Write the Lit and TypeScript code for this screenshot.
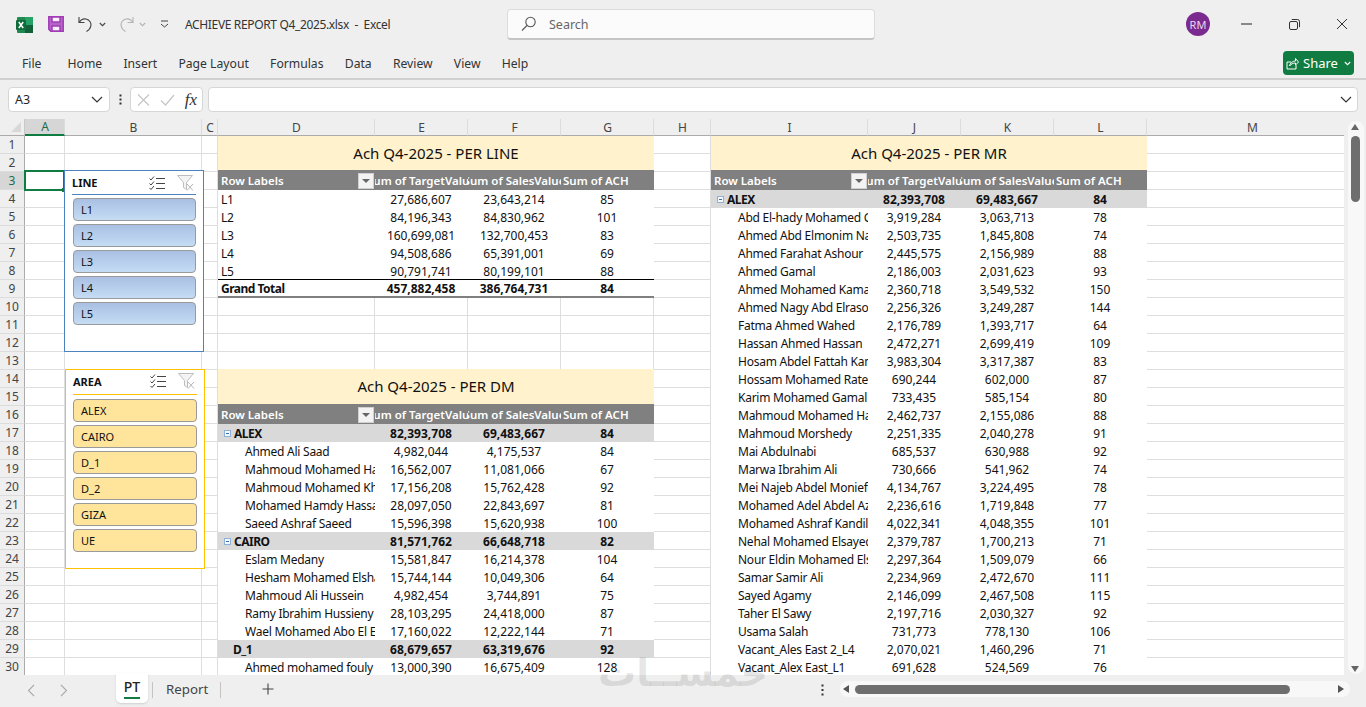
import { LitElement, html, css } from "lit";
import { customElement } from "lit/decorators.js";

const COLS = ["A","B","C","D","E","F","G","H","I","J","K","L","M"];

type Row = [string, string, string, string, string?];
// kinds: "" child (indented), "t" top-level item, "g" group with collapse box, "h" group with no box, "T" grand total

const LINE: Row[] = [
  ["L1","27,686,607","23,643,214","85","t"],
  ["L2","84,196,343","84,830,962","101","t"],
  ["L3","160,699,081","132,700,453","83","t"],
  ["L4","94,508,686","65,391,001","69","t"],
  ["L5","90,791,741","80,199,101","88","t"],
  ["Grand Total","457,882,458","386,764,731","84","T"],
];
const DM: Row[] = [
  ["ALEX","82,393,708","69,483,667","84","g"],
  ["Ahmed Ali Saad","4,982,044","4,175,537","84"],
  ["Mahmoud Mohamed Hassan","16,562,007","11,081,066","67"],
  ["Mahmoud Mohamed Khalil","17,156,208","15,762,428","92"],
  ["Mohamed Hamdy Hassan","28,097,050","22,843,697","81"],
  ["Saeed Ashraf Saeed","15,596,398","15,620,938","100"],
  ["CAIRO","81,571,762","66,648,718","82","g"],
  ["Eslam Medany","15,581,847","16,214,378","104"],
  ["Hesham Mohamed Elshamy","15,744,144","10,049,306","64"],
  ["Mahmoud Ali Hussein","4,982,454","3,744,891","75"],
  ["Ramy Ibrahim Hussieny Ali","28,103,295","24,418,000","87"],
  ["Wael Mohamed Abo El Ela","17,160,022","12,222,144","71"],
  ["D_1","68,679,657","63,319,676","92","h"],
  ["Ahmed mohamed fouly","13,000,390","16,675,409","128"],
];
const MR: Row[] = [
  ["ALEX","82,393,708","69,483,667","84","g"],
  ["Abd El-hady Mohamed Gaber","3,919,284","3,063,713","78"],
  ["Ahmed Abd Elmonim Nasr","2,503,735","1,845,808","74"],
  ["Ahmed Farahat Ashour","2,445,575","2,156,989","88"],
  ["Ahmed Gamal","2,186,003","2,031,623","93"],
  ["Ahmed Mohamed Kamal","2,360,718","3,549,532","150"],
  ["Ahmed Nagy Abd Elrasoul","2,256,326","3,249,287","144"],
  ["Fatma Ahmed Wahed","2,176,789","1,393,717","64"],
  ["Hassan Ahmed Hassan","2,472,271","2,699,419","109"],
  ["Hosam Abdel Fattah Kamel","3,983,304","3,317,387","83"],
  ["Hossam Mohamed Rateb","690,244","602,000","87"],
  ["Karim Mohamed Gamal","733,435","585,154","80"],
  ["Mahmoud Mohamed Hassan","2,462,737","2,155,086","88"],
  ["Mahmoud Morshedy","2,251,335","2,040,278","91"],
  ["Mai Abdulnabi","685,537","630,988","92"],
  ["Marwa Ibrahim Ali","730,666","541,962","74"],
  ["Mei Najeb Abdel Monief","4,134,767","3,224,495","78"],
  ["Mohamed Adel Abdel Aziz","2,236,616","1,719,848","77"],
  ["Mohamed Ashraf Kandil","4,022,341","4,048,355","101"],
  ["Nehal Mohamed Elsayed","2,379,787","1,700,213","71"],
  ["Nour Eldin Mohamed Elsayed","2,297,364","1,509,079","66"],
  ["Samar Samir Ali","2,234,969","2,472,670","111"],
  ["Sayed Agamy","2,146,099","2,467,508","115"],
  ["Taher El Sawy","2,197,716","2,030,327","92"],
  ["Usama Salah","731,773","778,130","106"],
  ["Vacant_Ales East 2_L4","2,070,021","1,460,296","71"],
  ["Vacant_Alex East_L1","691,628","524,569","76"],
];

type Pivot = { col: number; row: number; title: string; rows: Row[]; lift?: boolean };
const PIVOTS: Pivot[] = [
  { col: 4, row: 1, title: "Ach Q4-2025 - PER LINE", rows: LINE },
  { col: 4, row: 14, title: "Ach Q4-2025 - PER DM", rows: DM, lift: true },
  { col: 9, row: 1, title: "Ach Q4-2025 - PER MR", rows: MR },
];

const pos = (c: number, r: number, cs = 1, rs = 1) =>
  `grid-column:${c + 1} / span ${cs};grid-row:${r + 1} / span ${rs}`;

@customElement("app-root")
export class AppRoot extends LitElement {
  static styles = css`
    :host { display: block; width: 1366px; height: 707px; overflow: hidden; background: #efefef; font-family: "Noto Sans", "Open Sans", sans-serif; color: #262626; }
    .app { display: flex; flex-direction: column; height: 707px; position: relative; }
    svg { display: block; flex: none; }

    .titlebar { height: 48px; display: flex; align-items: center; position: relative; flex: none; }
    .qat { display: flex; align-items: center; padding-left: 16px; }
    .doc { font-size: 12px; margin-left: 16px; color: #333; white-space: pre; letter-spacing: -0.35px; }
    .search { position: absolute; left: 507px; top: 9px; width: 368px; height: 31px; box-sizing: border-box; background: #fbfbfb; border: 1px solid #dcdcdc; border-bottom: 2px solid #c4c4c4; border-radius: 4px; display: flex; align-items: center; padding-left: 13px; gap: 13px; font-size: 12.5px; color: #666; }
    .right { margin-left: auto; display: flex; align-items: center; }
    .avatar { width: 24px; height: 24px; border-radius: 50%; background: #7b2a8f; color: #e8d6ee; font-size: 11px; display: flex; align-items: center; justify-content: center; margin-right: 12px; }
    .win { width: 48px; display: flex; justify-content: center; }

    .ribbon { height: 30px; flex: none; display: flex; align-items: center; font-size: 12.2px; color: #333; padding-left: 22px; position: relative; }
    .ribbon span { margin-right: 21.2px; }
    .ribbon span.file { margin-right: 26px; }
    .share { position: absolute; left: 1283px; top: 3px; width: 71px; height: 24px; background: #107c41; border-radius: 4px; color: #fff; display: flex; align-items: center; justify-content: center; gap: 4px; font-size: 13px; box-sizing: border-box; }
    .share .lbl { font-weight: 400; }
    .share .car { margin-left: 2px; }
    .shadowline { height: 2px; flex: none; background: #d0d0d0; }

    .fbar { height: 39px; flex: none; display: flex; align-items: center; padding: 0 8px; }
    .box { background: #fff; border: 1px solid #d6d6d6; border-radius: 4px; height: 25px; box-sizing: border-box; display: flex; align-items: center; }
    .namebox { width: 102px; font-size: 12.5px; padding: 0 6px; justify-content: space-between; }
    .vdots { width: 20px; display: flex; justify-content: center; }
    .fxbox { width: 73px; padding: 0 5px 0 6px; justify-content: space-between; margin-right: 5px; }
    .fx { font-family: "Liberation Serif", serif; font-style: italic; font-size: 17px; color: #333; }
    .finput { flex: 1; justify-content: flex-end; padding-right: 5px; }

    .sheetwrap { flex: none; height: 556px; display: flex; position: relative; overflow: hidden; }
    .grid { display: grid; grid-template-columns: 25px 40px 137px 16px 157px 93px 93px 93px 57px 157px 93px 93px 93px 211px; grid-template-rows: 17px repeat(30, 18px); width: 1344px; height: 556px; overflow: hidden; background: #fff; flex: none; }
    .corner { background: #efefef; border-bottom: 1px solid #ababab; border-right: 1px solid #c8c8c8; box-sizing: border-box; position: relative; }
    .corner::after { content: ""; position: absolute; right: 3px; bottom: 3px; border: 5px solid transparent; border-right-color: #d8d8d8; border-bottom-color: #d8d8d8; }
    .ch { background: #efefef; border-bottom: 1px solid #ababab; border-right: 1px solid #dcdcdc; box-sizing: border-box; font-size: 12px; color: #444; display: flex; align-items: center; justify-content: center; padding-left: 1px; }
    .ch.sel { background: #d6d6d6; border-bottom: 2px solid #107c41; color: #1a6d4a; }
    .rh { background: #efefef; border-bottom: 1px solid #dcdcdc; border-right: 1px solid #ababab; box-sizing: border-box; font-size: 12px; color: #444; display: flex; align-items: center; justify-content: center; }
    .rh.sel { background: #d6d6d6; color: #1a6d4a; }
    .c { border-right: 1px solid #dedede; border-bottom: 1px solid #dedede; box-sizing: border-box; }

    .title { background: #fff2cc; display: flex; align-items: center; justify-content: center; font-size: 15px; color: #111; position: relative; padding-bottom: 3px; box-sizing: border-box; }
    .title.lift { margin-top: -1px; }
    .hd { background: #808080; color: #fff; font-size: 11.5px; font-weight: 600; margin-top: -2px; display: flex; align-items: center; justify-content: center; white-space: nowrap; overflow: hidden; position: relative; }
    .hd.lbl { justify-content: flex-start; padding-left: 3px; }
    .hd.start { justify-content: flex-start; padding-left: 2px; }
    .dd { position: absolute; right: 1px; top: 3px; width: 16px; height: 16px; background: #f3f3f3; border: 1px solid #d0d0d0; box-sizing: border-box; display: flex; align-items: center; justify-content: center; }
    .dd::after { content: ""; border: 4px solid transparent; border-top: 4px solid #666; border-bottom: 0; }
    .td { background: #fff; font-size: 12px; color: #111; display: flex; align-items: center; justify-content: center; white-space: nowrap; overflow: hidden; padding-right: 1px; box-sizing: border-box; }
    .td.lbl { justify-content: flex-start; padding: 0 0 0 27px; letter-spacing: -0.25px; }
    .td.lbl.t { padding-left: 3px; }
    .td.lbl.g { padding-left: 6px; gap: 3px; }
    .td.lbl.h { padding-left: 15px; }
    .td.bold { font-weight: 700; }
    .td.lbl.bold { letter-spacing: -0.5px; }
    .td.band { background: #d9d9d9; }
    .td.tot { margin-top: -1px; padding-top: 1px; border-top: 1px solid #000; border-bottom: 2px solid #808080; }
    .box9 { width: 7px; height: 7px; border: 1px solid #8fb0d8; background: #f4f7fb; box-sizing: border-box; position: relative; flex: none; }
    .box9::after { content: ""; position: absolute; left: 1px; right: 1px; top: 2px; height: 1px; background: #3b6ea5; }

    .selbox { position: absolute; left: 24px; top: 51px; width: 41px; height: 21px; border: 2px solid #107c41; box-sizing: border-box; }
    .handle { position: absolute; left: 62px; top: 69px; width: 4px; height: 4px; background: #107c41; }

    .slicer { position: absolute; background: #fff; box-sizing: border-box; border: 1px solid; padding: 0 7px; }
    .slicer.line { left: 64px; top: 51px; width: 140px; height: 182px; border-color: #4a83bd; }
    .slicer.area { left: 65px; top: 250px; width: 140px; height: 200px; border-color: #ffc000; }
    .sh { height: 24px; box-sizing: border-box; display: flex; align-items: center; font-size: 11px; font-weight: 700; color: #111; border-bottom: 1px solid #4a83bd; }
    .area .sh { border-bottom-color: #ffc000; height: 25px; padding-bottom: 2px; }
    .sh .name { flex: 1; }
    .sh .multi { margin-right: 12px; }
    .sh .clear { margin-right: 2px; }
    .items { display: flex; flex-direction: column; gap: 3px; margin-top: 3px; padding: 0 0 0 1px; }
    .area .items { margin-top: 4px; padding-left: 0; }
    .item { height: 23px; box-sizing: border-box; border: 1px solid #9a9a9a; border-radius: 4px; background: linear-gradient(#a9c0e3, #c5dcf5); font-size: 11px; color: #111; display: flex; align-items: center; padding-left: 7px; }
    .area .item { background: #ffe49c; }

    .vscroll { width: 22px; flex: none; background: #efefef; position: relative; }
    .vtrack { position: absolute; left: 4px; top: 2px; width: 16px; bottom: 1px; background: #f8f8f8; border-radius: 8px; }
    .vthumb { position: absolute; left: 3px; top: 15px; width: 9px; height: 66px; border-radius: 5px; background: #6e6e6e; }
    .arrowup { position: absolute; left: 3px; top: 3px; border: 4.5px solid transparent; border-top: 0; border-bottom: 6px solid #666; }
    .arrowdn { position: absolute; left: 3px; bottom: 2px; border: 4.5px solid transparent; border-bottom: 0; border-top: 6px solid #666; }

    .tabs { height: 32px; flex: none; display: flex; align-items: center; position: relative; background: #efefef; }
    .nav { position: absolute; top: 9px; }
    .nav.back { left: 27px; }
    .nav.fwd { left: 60px; }
    .tab { position: absolute; }
    .tab.pt { left: 116px; top: -2px; width: 32px; height: 30px; background: #fff; border-radius: 0 0 5px 5px; box-shadow: 0 1px 2px #cfcfcf; box-sizing: border-box; text-align: center; padding-top: 4px; color: #222; font-size: 14px; font-weight: 500; }
    .tab.pt::after { content: ""; position: absolute; left: 8px; right: 8px; bottom: 4px; height: 2px; background: #107c41; }
    .tab.rep { left: 166px; top: 5px; color: #444; font-size: 13.3px; }
    .sep { position: absolute; top: 7px; width: 1px; height: 16px; background: #c4c4c4; }
    .sep.a { left: 152px; }
    .sep.b { left: 220px; }
    .plus { position: absolute; left: 262px; top: 8px; }
    .hdots { position: absolute; left: 821px; top: 9px; }
    .htrack { position: absolute; left: 840px; top: 6px; width: 510px; height: 16px; border-radius: 8px; background: #f8f8f8; }
    .hthumb { position: absolute; left: 15px; top: 4px; width: 435px; height: 9px; border-radius: 5px; background: #6e6e6e; }
    .arrowl { position: absolute; left: 3px; top: 4px; border: 4.5px solid transparent; border-left: 0; border-right: 6px solid #555; }
    .arrowr { position: absolute; right: 6px; top: 4px; border: 4.5px solid transparent; border-right: 0; border-left: 6px solid #555; }

    .mark { position: absolute; left: 590px; top: 648px; width: 186px; height: 50px; display: flex; align-items: center; justify-content: center; font-family: "DejaVu Sans", sans-serif; font-weight: 700; font-size: 38px; line-height: 50px; color: rgba(60,60,60,.12); pointer-events: none; white-space: nowrap; }
    .undo { margin-left: 14px; }
    .save { margin-left: 15px; }
    .redo { margin-left: 12px; }
    .car5 { margin-left: 5px; }
    .cust { margin-left: 14px; }
  `;

  private gridCells() {
    const taken = new Set<string>();
    const out: unknown[] = [];
    PIVOTS.forEach(p => {
      for (let r = p.row; r < p.row + 3 + p.rows.length; r++)
        for (let c = p.col; c < p.col + 4; c++) taken.add(`${r}:${c}`);
    });
    for (let r = 1; r <= 30; r++)
      for (let c = 1; c <= 13; c++)
        if (!taken.has(`${r}:${c}`)) out.push(html`<div class="c" style=${pos(c, r)}></div>`);
    PIVOTS.forEach(p => {
      out.push(html`<div class="title ${p.lift ? "lift" : ""}" style=${pos(p.col, p.row, 4, 2)}>${p.title}</div>`);
      const h = p.row + 2;
      out.push(html`<div class="hd lbl" style=${pos(p.col, h)}>Row Labels<span class="dd"></span></div>`);
      ["Sum of TargetValue", "Sum of SalesValue", "Sum of ACH"].forEach((t, i) =>
        out.push(html`<div class="hd ${i === 2 ? "start" : ""}" style=${pos(p.col + 1 + i, h)}>${t}</div>`));
      p.rows.forEach((row, i) => {
        const r = h + 1 + i;
        if (r > 30) return;
        const k = row[4] ?? "";
        const bold = k === "g" || k === "h" || k === "T";
        const band = k === "g" || k === "h";
        const cl = `td ${bold ? "bold" : ""} ${band ? "band" : ""} ${k === "T" ? "tot" : ""}`;
        out.push(html`<div class="${cl} lbl ${k === "T" ? "t" : k}" style=${pos(p.col, r)}>${k === "g" ? html`<span class="box9"></span>` : ""}${row[0]}</div>`);
        for (let j = 1; j <= 3; j++)
          out.push(html`<div class=${cl} style=${pos(p.col + j, r)}>${row[j]}</div>`);
      });
    });
    return out;
  }

  private multiIcon() {
    return html`<svg class="multi" width="16" height="14" viewBox="0 0 16 14" fill="none" stroke="#444" stroke-width="1"><path d="M.5 2.500l1.500 1.500 3-3.500M.5 7.500l1.500 1.500 3-3.500M.5 12l1.500 1.500 3-3.500"/><path d="M7 2.500h9M7 7.500h9M7 12.500h9"/></svg>`;
  }
  private clearIcon() {
    return html`<svg class="clear" width="17" height="16" viewBox="0 0 17 16" fill="none"><path d="M.5 .5h15l-6 7v7l-3-2v-5z" stroke="#bdbdbd" fill="#f4f4f4"/><path d="M10 9l6 6.500M16 9l-6 6.500" stroke="#b5b5b5"/></svg>`;
  }

  private slicer(cls: string, name: string, items: string[]) {
    return html`<div class="slicer ${cls}">
      <div class="sh"><span class="name">${name}</span>${this.multiIcon()}${this.clearIcon()}</div>
      <div class="items">${items.map(i => html`<div class="item">${i}</div>`)}</div>
    </div>`;
  }

  render() {
    return html`<div class="app">
      <div class="titlebar">
        <div class="qat">
          <svg width="17" height="17" viewBox="0 0 17 17"><rect x="1" y="1" width="16" height="16" rx="1" fill="#1d8a50"/><rect x="9" y="1" width="8" height="8" fill="#25a366"/><rect x="9" y="9" width="8" height="8" fill="#10613a"/><rect x="0" y="4" width="10" height="10" rx="1" fill="#0f6b3a"/><path d="M2.800 6l4.400 6M7.200 6l-4.400 6" stroke="#fff" stroke-width="1.500"/></svg>
          <svg class="save" width="16" height="16" viewBox="0 0 16 16" fill="none" stroke="#a03cb4" stroke-width="1.500"><path d="M.8 .8h14.400v14.400H2.800l-2-2z" fill="#b765c8"/><rect x="4" y="1" width="8" height="5" fill="#fbeefd"/><rect x="4" y="10" width="8" height="5" fill="#fbeefd"/></svg>
          <svg class="undo" width="16" height="17" viewBox="0 0 16 17" fill="none" stroke="#444" stroke-width="1.100"><path d="M1 1v5.500h5.500"/><path d="M1 6.500C3 3.500 5.500 2.500 8 3c3.800.8 5.600 4 4.800 7.200-.5 2.200-2.400 4.300-4.300 5.300"/></svg>
          <svg class="car5" width="7" height="5" viewBox="0 0 7 5" fill="none" stroke="#444" stroke-width="1.100"><path d="M.8 1l2.700 2.700L6.200 1"/></svg>
          <svg class="redo" width="16" height="17" viewBox="0 0 16 17" fill="none" stroke="#b4b4b4" stroke-width="1.100"><path d="M15 1v5.500H9.500"/><path d="M15 6.500C13 3.500 10.500 2.500 8 3c-3.800.8-5.600 4-4.800 7.200.5 2.200 2.400 4.300 4.300 5.300"/></svg>
          <svg class="car5" width="7" height="5" viewBox="0 0 7 5" fill="none" stroke="#b4b4b4" stroke-width="1.100"><path d="M.8 1l2.700 2.700L6.200 1"/></svg>
          <svg class="cust" width="9" height="8" viewBox="0 0 9 8" fill="none" stroke="#444" stroke-width="1"><path d="M1 1h7"/><path d="M1 4l3.500 3L8 4"/></svg>
        </div>
        <span class="doc">ACHIEVE REPORT Q4_2025.xlsx  -  Excel</span>
        <div class="search">
          <svg width="15" height="16" viewBox="0 0 15 16" fill="none" stroke="#555" stroke-width="1.100"><circle cx="9.500" cy="6" r="4.700"/><path d="M6 9.500L1 14.500"/></svg>
          <span>Search</span>
        </div>
        <div class="right">
          <div class="avatar">RM</div>
          <div class="win"><svg width="11" height="2" viewBox="0 0 11 2"><path d="M0 1h11" stroke="#333" stroke-width="1.100"/></svg></div>
          <div class="win"><svg width="11" height="11" viewBox="0 0 11 11" fill="none" stroke="#333" stroke-width="1"><rect x=".5" y="2.500" width="8" height="8" rx="1.500"/><path d="M2.800 .5h5.700a2 2 0 0 1 2 2v5.700"/></svg></div>
          <div class="win"><svg width="12" height="12" viewBox="0 0 12 12" fill="none" stroke="#333" stroke-width="1"><path d="M1 1l10 10M11 1L1 11"/></svg></div>
        </div>
      </div>
      <div class="ribbon">
        <span class="file">File</span><span>Home</span><span>Insert</span><span>Page Layout</span><span>Formulas</span><span>Data</span><span>Review</span><span>View</span><span>Help</span>
        <div class="share">
          <svg width="13" height="13" viewBox="0 0 13 13" fill="none" stroke="#fff" stroke-width="1"><path d="M5 5H1v7h9V8"/><path d="M3.500 9c.5-3 3-5 6-5V1.500L12.500 5 9.500 8V6C7 6 5 7 3.500 9z"/></svg>
          <div class="lbl">Share</div>
          <svg class="car" width="7" height="5" viewBox="0 0 7 5" fill="none" stroke="#fff" stroke-width="1.100"><path d="M.8 1l2.700 2.700L6.200 1"/></svg>
        </div>
      </div>
      <div class="shadowline"></div>
      <div class="fbar">
        <div class="box namebox"><span>A3</span><svg width="12" height="7" viewBox="0 0 12 7" fill="none" stroke="#333" stroke-width="1.200"><path d="M1 1l5 5 5-5"/></svg></div>
        <div class="vdots"><svg width="3" height="11" viewBox="0 0 3 11" fill="#333"><rect width="2" height="2" x=".5" y=".5"/><rect width="2" height="2" x=".5" y="4.500"/><rect width="2" height="2" x=".5" y="8.500"/></svg></div>
        <div class="box fxbox">
          <svg width="13" height="12" viewBox="0 0 13 12" fill="none" stroke="#c6c6c6" stroke-width="1.200"><path d="M1 .5l11 11M12 .5l-11 11"/></svg>
          <svg width="15" height="12" viewBox="0 0 15 12" fill="none" stroke="#c6c6c6" stroke-width="1.200"><path d="M1 6.500l4.500 4.500L14 1"/></svg>
          <span class="fx">fx</span>
        </div>
        <div class="box finput"><svg width="12" height="7" viewBox="0 0 12 7" fill="none" stroke="#333" stroke-width="1.200"><path d="M1 1l5 5 5-5"/></svg></div>
      </div>
      <div class="sheetwrap">
        <div class="grid">
          <div class="corner" style=${pos(0, 0)}></div>
          ${COLS.map((c, i) => html`<div class="ch ${i === 0 ? "sel" : ""}" style=${pos(i + 1, 0)}>${c}</div>`)}
          ${Array.from({ length: 30 }, (_, i) => html`<div class="rh ${i === 2 ? "sel" : ""}" style=${pos(0, i + 1)}>${i + 1}</div>`)}
          ${this.gridCells()}
        </div>
        <div class="selbox"></div>
        <div class="handle"></div>
        ${this.slicer("line", "LINE", ["L1", "L2", "L3", "L4", "L5"])}
        ${this.slicer("area", "AREA", ["ALEX", "CAIRO", "D_1", "D_2", "GIZA", "UE"])}
        <div class="vscroll">
          <div class="vtrack">
            <span class="arrowup"></span>
            <div class="vthumb"></div>
            <span class="arrowdn"></span>
          </div>
        </div>
      </div>
      <div class="tabs">
        <svg class="nav back" width="8" height="13" viewBox="0 0 8 13" fill="none" stroke="#aaa" stroke-width="1.100"><path d="M7 1L1.500 6.500 7 12"/></svg>
        <svg class="nav fwd" width="8" height="13" viewBox="0 0 8 13" fill="none" stroke="#aaa" stroke-width="1.100"><path d="M1 1l5.500 5.500L1 12"/></svg>
        <div class="tab pt">PT</div>
        <div class="sep a"></div>
        <div class="tab rep">Report</div>
        <div class="sep b"></div>
        <svg class="plus" width="12" height="12" viewBox="0 0 12 12" stroke="#444" stroke-width="1.100"><path d="M6 .5v11M.5 6h11"/></svg>
        <svg class="hdots" width="3" height="12" viewBox="0 0 3 12" fill="#333"><rect width="2" height="2" x=".5" y=".5"/><rect width="2" height="2" x=".5" y="5"/><rect width="2" height="2" x=".5" y="9.500"/></svg>
        <div class="htrack"><span class="arrowl"></span><div class="hthumb"></div><span class="arrowr"></span></div>
      </div>
      <div class="mark">خمســات</div>
    </div>`;
  }
}
